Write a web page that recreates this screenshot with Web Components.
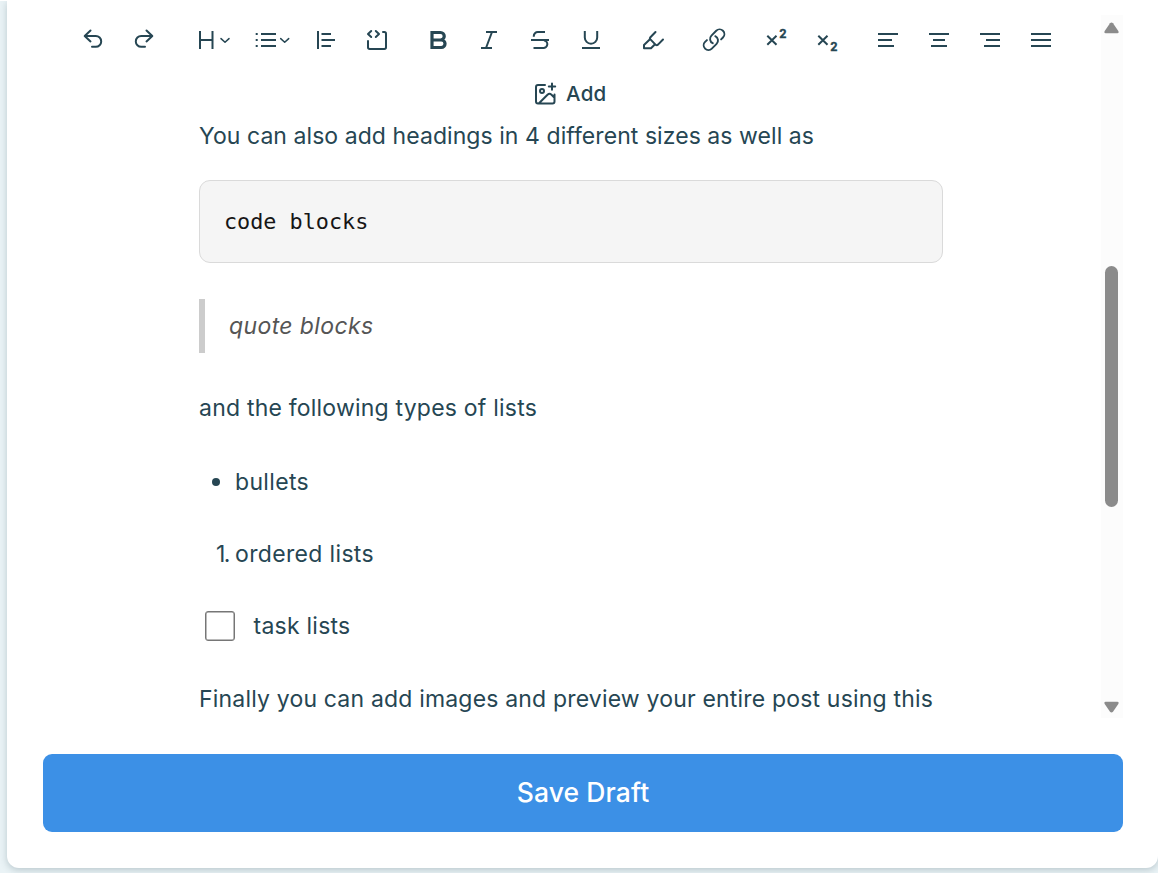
<!DOCTYPE html>
<html lang="en"><head><meta charset="utf-8"><title>Post editor</title>
<style>
html,body{margin:0;height:100%;overflow:hidden}
body{background:#eaf3f6;font-family:Inter,"Liberation Sans",sans-serif;color:#264653;box-sizing:border-box;border-top:1px solid #fff}
</style></head><body>
<post-editor></post-editor>
<script>
const define=(name,html)=>customElements.define(name,class extends HTMLElement{
  constructor(){super();this.attachShadow({mode:'open'}).innerHTML=html}
});

// A single line of text whose tracking is adjusted to fill a given width.
customElements.define('fit-text',class extends HTMLElement{
  constructor(){super();this.attachShadow({mode:'open'}).innerHTML='<style>:host{display:block;white-space:nowrap}span{display:inline-block}</style><span><slot></slot></span>'}
  connectedCallback(){
    const s=this.shadowRoot.querySelector('span'),n=this.textContent.length;
    const w=s.getBoundingClientRect().width;
    s.style.letterSpacing=((+this.getAttribute('width')-w)/n)+'px';
  }
});

const chev=x=>`<path stroke-width="1.5" d="M${x} 13.6l4 3.7 4-3.7"/>`;
const icons={
undo:[30,'<path d="M12.5 5.5L6.7 11l5.8 5.4M7 11h10.8a5.4 5.4 0 0 1 0 10.8H14"/>'],
redo:[30,'<path d="M17.5 5.5l5.8 5.5-5.8 5.4M23 11H12.2a5.4 5.4 0 0 0 0 10.8H16"/>'],
heading:[40,'<path stroke-linecap="butt" d="M6 6v18M18.5 6v18M6 15h12.5"/>'+chev(27)],
list:[40,'<path stroke-linecap="butt" d="M9 9H24M9 15H24M9 21H24M3.700 9h2M3.700 15h2M3.700 21h2"/>'+chev(28.700)],
indent:[30,'<path stroke-linecap="butt" d="M7 6v18M10.500 9h9.500M10.500 15h13.500M10.500 21h9.500"/>'],
code:[30,'<path d="M9.200 6L6 9l3.200 3M13.800 6L17 9l-3.200 3M6 16v6.300q0 1.700 1.700 1.700h14.600q1.700 0 1.700-1.700V8.700Q24 7 22.300 7H21"/>'],
bold:[30,'<path stroke-width="3.2" stroke-linejoin="miter" d="M9 7.500h8.500a3.700 3.700 0 0 1 0 7.500H9zM9 15h9.300a3.750 3.750 0 0 1 0 7.500H9z"/>'],
italic:[30,'<path stroke-linecap="butt" d="M12 7h11M7 23h11M18 7l-6 16"/>'],
strike:[30,'<path stroke-linecap="butt" d="M20 7h-7.200a4 4 0 0 0-4 4v.700M6 15h18M8.500 23H18a3.700 3.700 0 0 0 1-7.600"/>'],
underline:[30,'<path stroke-linecap="butt" d="M8.800 6v6.500a6.200 6.200 0 0 0 12.400 0V6M6 23h18"/>'],
mark:[30,'<path d="M17.500 7l-5.300 5.500q-.700.800 0 1.600l4.800 5q1.300 1.800 3 .500L25 14.500M12.200 14l-6.200 6V23.300h7l4-4"/>'],
link:[30,'<g transform="translate(2.300 2) scale(1.060)"><path stroke-width="1.800" d="M13.190 8.688a4.500 4.500 0 0 1 1.242 7.244l-4.500 4.500a4.500 4.500 0 0 1-6.364-6.364l1.757-1.757m13.350-.622 1.757-1.757a4.500 4.500 0 0 0-6.364-6.364l-4.500 4.500a4.500 4.500 0 0 0 1.242 7.244"/></g>'],
sup:[30,'<path stroke-linecap="butt" d="M6.300 10.800l9.200 9M15.500 10.800l-9.200 9"/><text x="18.300" y="13.200">2</text>'],
sub:[30,'<path stroke-linecap="butt" d="M6.300 10.800l9.200 9M15.500 10.800l-9.200 9"/><text x="18.300" y="26">2</text>'],
left:[30,'<path stroke-linecap="butt" d="M5 9h20M5 15h14M5 21h16"/>'],
center:[30,'<path stroke-linecap="butt" d="M5 9h20M9 15h12M7 21h16"/>'],
right:[30,'<path stroke-linecap="butt" d="M5 9h20M11 15h14M9 21h16"/>'],
justify:[30,'<path stroke-linecap="butt" d="M5 9h20M5 15h20M5 21h20"/>'],
image:[30,'<path d="M15 6H8q-2 0-2 2v14.500q0 2 2 2h14.500q2 0 2-2V15.500M9 24.200l8.500-8.500q2-1.800 4 0L24.500 18.700M18.800 7.500h6.400M22 4.400v6.300"/><circle cx="12" cy="12" r="2"/>']
};
customElements.define('tool-icon',class extends HTMLElement{
  connectedCallback(){
    const [w,d]=icons[this.getAttribute('name')];
    this.attachShadow({mode:'open'}).innerHTML=`<style>:host{display:block;flex:none}svg{display:block;fill:none;stroke:#264653;stroke-width:2;stroke-linecap:round;stroke-linejoin:round}text{fill:#264653;stroke:#264653;stroke-width:.4;font:700 11.500px Inter,sans-serif}</style><svg width="${w}" height="30" viewBox="0 0 ${w} 30">${d}</svg>`;
  }
});

define('tool-group','<style>:host{display:flex;gap:21px}</style><slot></slot>');
define('editor-toolbar',`<style>
:host{display:block;height:122px;box-sizing:border-box;padding-top:24px}
.row{display:flex;margin-left:71px}
.add{display:flex;align-items:center;margin:24px 0 0 523px;font:500 20.500px/30px Inter,sans-serif}
.add fit-text{margin-left:6px}
</style>
<div class="row">
<tool-group><tool-icon name="undo"></tool-icon><tool-icon name="redo"></tool-icon></tool-group>
<tool-group style="margin-left:35px"><tool-icon name="heading"></tool-icon></tool-group>
<tool-group style="margin-left:18px"><tool-icon name="list"></tool-icon></tool-group>
<tool-group style="margin-left:19px"><tool-icon name="indent"></tool-icon><tool-icon name="code"></tool-icon></tool-group>
<tool-group style="margin-left:31px"><tool-icon name="bold"></tool-icon><tool-icon name="italic"></tool-icon><tool-icon name="strike"></tool-icon><tool-icon name="underline"></tool-icon></tool-group>
<tool-group style="margin-left:32px"><tool-icon name="mark"></tool-icon></tool-group>
<tool-group style="margin-left:31px"><tool-icon name="link"></tool-icon></tool-group>
<tool-group style="margin-left:32px"><tool-icon name="sup"></tool-icon><tool-icon name="sub"></tool-icon></tool-group>
<tool-group style="margin-left:31px"><tool-icon name="left"></tool-icon><tool-icon name="center"></tool-icon><tool-icon name="right"></tool-icon><tool-icon name="justify"></tool-icon></tool-group>
</div>
<div class="add"><tool-icon name="image"></tool-icon><fit-text width="40.500">Add</fit-text></div>`);

define('code-block',`<style>:host{display:block;box-sizing:border-box;height:83px;background:#f5f5f5;border:1px solid #dadada;border-radius:11px;padding:22px 24px;color:#161616;font:21.800px/38px "DejaVu Sans Mono",monospace}</style><slot></slot>`);
define('quote-block',`<style>:host{display:block;box-sizing:border-box;height:54px;border-left:6px solid #ccc;padding-left:24px;color:#555;font-style:italic;line-height:54px}</style><slot></slot>`);
define('list-row',`<style>:host{display:flex;align-items:center;height:36px}.m{flex:none;width:36px;display:flex;box-sizing:border-box}
.dot{width:8px;height:8px;border-radius:50%;background:#264653;margin-left:13px}
.num{margin-left:17px}.box{box-sizing:border-box;width:30px;height:30px;border:1px solid #767676;box-shadow:inset 0 0 0 .5px #767676;border-radius:3px;background:#fff;margin-left:6px}
:host([kind=task]) .m{width:54.500px}
:host(:not([kind=bullet])) .dot,:host(:not([kind=number])) .num,:host(:not([kind=task])) .box{display:none}
</style><div class="m"><div class="dot"></div><fit-text class="num" width="13">1.</fit-text><div class="box"></div></div><slot></slot>`);

define('post-body',`<style>:host{display:flex;flex-direction:column;width:744px;margin-left:192px;font:380 23px/36px Inter,sans-serif}
code-block{margin-top:26px}quote-block{margin:36px 0 37px}list-row{margin-top:36px}
</style>
<fit-text style="margin-top:-5px" width="615">You can also add headings in 4 different sizes as well as</fit-text>
<code-block>code blocks</code-block>
<quote-block><fit-text width="144.500">quote blocks</fit-text></quote-block>
<fit-text width="338">and the following types of lists</fit-text>
<list-row kind="bullet" style="margin-top:38px"><fit-text width="74">bullets</fit-text></list-row>
<list-row kind="number"><fit-text width="139">ordered lists</fit-text></list-row>
<list-row kind="task"><fit-text width="97">task lists</fit-text></list-row>
<fit-text style="margin-top:37px" width="734">Finally you can add images and preview your entire post using this</fit-text>`);

define('scroll-track',`<style>:host{display:flex;flex-direction:column;align-items:center;box-sizing:border-box;padding-right:1px;width:22px;height:703px;margin-top:14px;background:#fcfcfc;flex:none}
svg{display:block;flex:none}.thumb{width:13px;flex:none;height:241px;border-radius:6.500px;background:#8b8b8b;margin:232px 0 194px}</style>
<svg style="margin-top:7px" width="15" height="12"><path fill="#8b8b8b" d="M6 1.200Q7.500-.400 9 1.200L14.300 9q1 2.200-1 2.300H1.700Q-.300 11.200.700 9z"/></svg>
<div class="thumb"></div>
<svg width="15" height="12"><path fill="#8b8b8b" d="M6 10.800Q7.500 12.400 9 10.800L14.300 3q1-2.200-1-2.300H1.700Q-.300.800.700 3z"/></svg>`);

define('save-button',`<style>:host{display:flex;align-items:center;justify-content:center;height:78px;margin:36px 35px 0 36px;border-radius:9px;background:#3c90e6;color:#fff;font:500 26.500px/76px Inter,sans-serif}fit-text{height:78px}</style><fit-text width="132.500">Save Draft</fit-text>`);

define('post-editor',`<style>:host{display:block;box-sizing:border-box;width:1151px;height:867px;margin-left:7px;background:#fff;border-radius:0 0 12px 12px;box-shadow:0 2px 7px rgba(38,70,83,.25)}
.scroll{display:flex;height:717px;overflow:hidden}.main{width:1094px;flex:none}</style>
<div class="scroll"><div class="main"><editor-toolbar></editor-toolbar><post-body></post-body></div><scroll-track></scroll-track></div>
<save-button></save-button>`);
</script></body></html>
